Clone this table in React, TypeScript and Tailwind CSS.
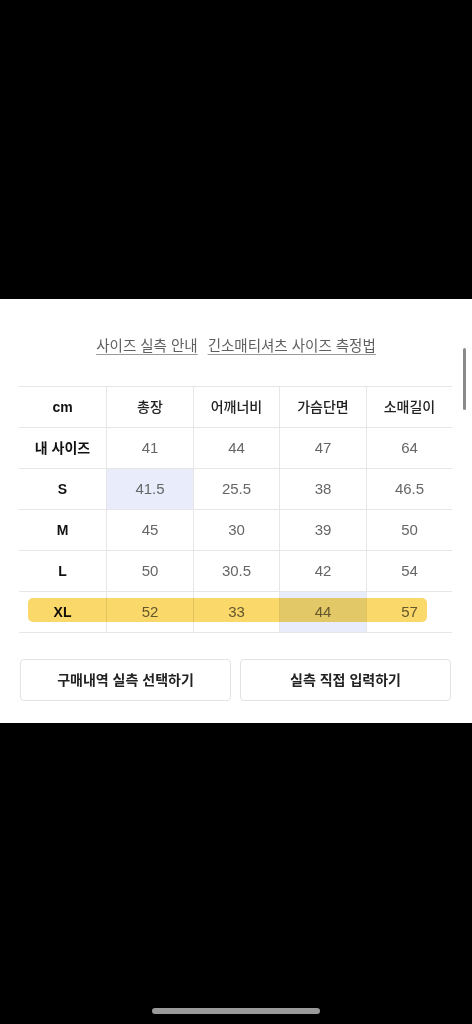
import React from "react";

const cols = ["총장", "어깨너비", "가슴단면", "소매길이"];
const rows: { label: string; vals: string[] }[] = [
  { label: "내 사이즈", vals: ["41", "44", "47", "64"] },
  { label: "S", vals: ["41.5", "25.5", "38", "46.5"] },
  { label: "M", vals: ["45", "30", "39", "50"] },
  { label: "L", vals: ["50", "30.5", "42", "54"] },
  { label: "XL", vals: ["52", "33", "44", "57"] },
];

const font = { fontFamily: '"Liberation Sans", "Noto Sans CJK KR", sans-serif' };

export default function App() {
  return (
    <div className="w-[472px] h-[1024px] bg-black flex flex-col" style={font}>
      <div className="h-[299px] shrink-0" />
      <div className="relative bg-white h-[424px] shrink-0 pt-[38px]">
        <div className="flex justify-center gap-[10px] h-[20px] items-center text-[14.5px] text-[#5f5f5f]">
          <span className="underline underline-offset-[3px] decoration-[#9a9a9a]">사이즈 실측 안내</span>
          <span className="underline underline-offset-[3px] decoration-[#9a9a9a]">긴소매티셔츠 사이즈 측정법</span>
        </div>

        <div className="relative ml-[19px] w-[433px] mt-[29px] border-t border-[#e6e6e6]">
          <div className="grid grid-cols-[87px_87px_86px_87px_86px] border-b border-[#e6e6e6] h-[41px]">
            <div className="flex items-center justify-center text-[14px] font-bold text-[#111]">cm</div>
            {cols.map((c) => (
              <div key={c} className="flex items-center justify-center border-l border-[#e6e6e6] text-[14px] font-medium text-[#222]">
                {c}
              </div>
            ))}
          </div>
          {rows.map((r, ri) => (
            <div key={r.label} className="grid grid-cols-[87px_87px_86px_87px_86px] border-b border-[#e6e6e6] h-[41px]">
              <div className="flex items-center justify-center text-[14px] font-bold text-[#111]">{r.label}</div>
              {r.vals.map((v, vi) => {
                const hl = (ri === 1 && vi === 0) || (ri === 4 && vi === 2);
                return (
                  <div
                    key={vi}
                    className={`flex items-center justify-center border-l border-[#e6e6e6] text-[15px] text-[#666] ${hl ? "bg-[#e8ecfb]" : ""}`}
                  >
                    {v}
                  </div>
                );
              })}
            </div>
          ))}
          <div className="absolute left-[9px] top-[211px] w-[399px] h-[24px] rounded-[5px] bg-[#fad45a] opacity-90 mix-blend-multiply" />
        </div>

        <div className="flex gap-[9px] ml-[20px] mt-[26px]">
          <button className="w-[211px] h-[42px] rounded-[4px] border border-[#e3e3e3] bg-white text-[14px] font-bold text-[#222]">
            구매내역 실측 선택하기
          </button>
          <button className="w-[211px] h-[42px] rounded-[4px] border border-[#e3e3e3] bg-white text-[14px] font-bold text-[#222]">
            실측 직접 입력하기
          </button>
        </div>

        <div className="absolute right-[6px] top-[49px] w-[3px] h-[62px] rounded-full bg-[#8a8a8a]" />
      </div>
      <div className="flex-1 flex items-end justify-center pb-[10px]">
        <div className="w-[168px] h-[6px] rounded-full bg-[#9a9a9a]" />
      </div>
    </div>
  );
}
